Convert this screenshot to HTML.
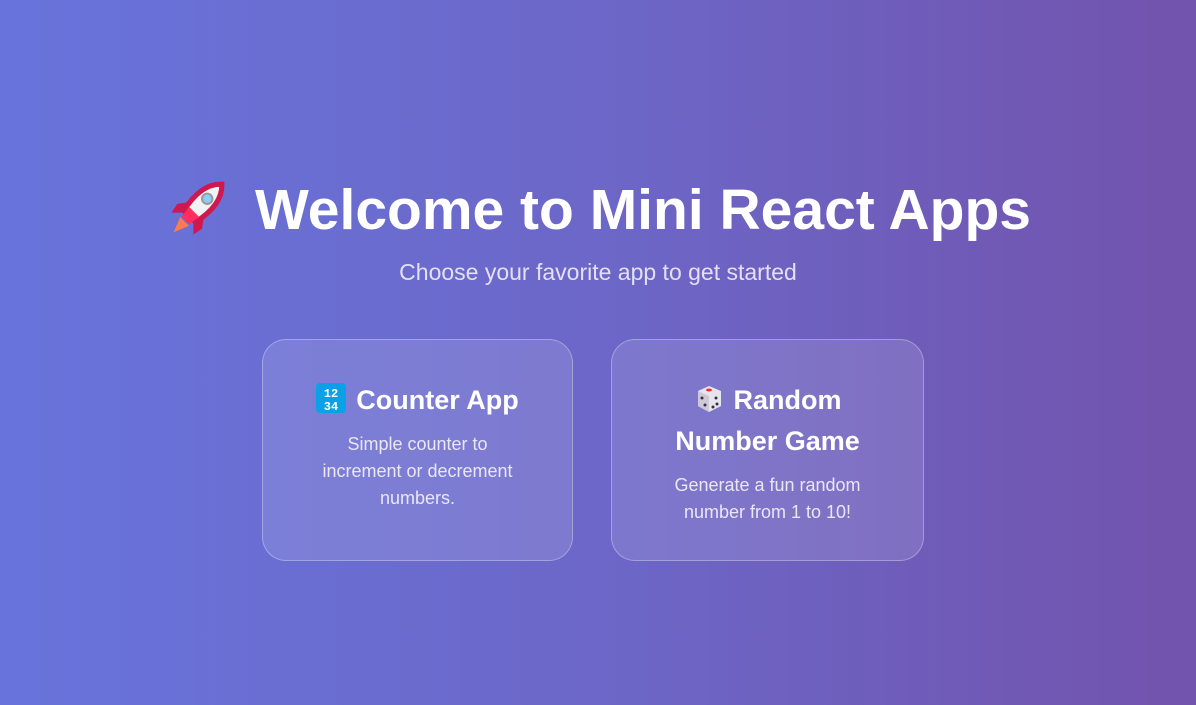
<!DOCTYPE html>
<html><head><meta charset="utf-8"><style>
*{margin:0;padding:0;box-sizing:border-box}
html,body{width:1196px;height:705px;overflow:hidden}
body{background:linear-gradient(90deg,#6874dc 0%,#6c67c8 50%,#7253ad 100%);font-family:"Liberation Sans",sans-serif;color:#fff;position:relative}
h1{position:absolute;top:174px;left:0;width:1196px;text-align:center;font-size:57px;font-weight:bold;line-height:72px;white-space:nowrap}
h1 svg{vertical-align:-12px;margin-right:26px}
.sub{position:absolute;top:259px;left:0;width:1196px;text-align:center;font-size:23px;color:#e4e0f4}
.card{position:absolute;top:339px;width:311px;height:222px;border-radius:24px;background:rgba(255,255,255,0.12);border:1px solid rgba(255,255,255,0.3);text-align:center;padding:0 30px}
.card h2{font-size:27px;font-weight:bold;line-height:41px}
.card h2 svg{vertical-align:-4px;margin-right:10px}
.card p{font-size:18px;line-height:27px;color:#eae6f6;margin-left:auto;margin-right:auto}
</style></head><body>
<h1><svg width="64" height="64" viewBox="0 0 62 60"><g transform="rotate(45 31 30)"><path d="M31 -4 C42 6 43 22 39 40 L23 40 C19 22 20 6 31 -4 Z" fill="#f2f2f2" stroke="#d0174f" stroke-width="5"/><path d="M23 28 L14 40 L16 50 L24 42 Z M39 28 L48 40 L46 50 L38 42 Z" fill="#d0174f"/><path d="M24 34 L38 34 L36 46 L26 46 Z" fill="#ff2e5f"/><path d="M25 47 L37 47 L31 62 Z" fill="#ff7a4c"/><circle cx="31" cy="16" r="5" fill="#8ecdf6" stroke="#999" stroke-width="2"/></g></svg>Welcome to Mini React Apps</h1>
<div class="sub">Choose your favorite app to get started</div>
<div class="card" style="left:262px;padding-top:40px"><h2><svg width="30" height="30" viewBox="0 0 30 30"><rect width="30" height="30" rx="4" fill="#0ba0e8"/><text x="15" y="14" font-size="12" font-weight="bold" fill="#fff" text-anchor="middle" font-family="Liberation Mono">12</text><text x="15" y="27" font-size="12" font-weight="bold" fill="#fff" text-anchor="middle" font-family="Liberation Mono">34</text></svg>Counter App</h2><p style="margin-top:10px;width:220px">Simple counter to increment or decrement numbers.</p></div>
<div class="card" style="left:611px;width:313px;padding-top:40px"><h2><svg width="30" height="30" viewBox="0 0 30 30"><path d="M4 8 L15 3 L27 8 L27 23 L15 29 L4 23 Z" fill="#e8e4ec"/><path d="M4 8 L15 13 L15 29 L4 23 Z" fill="#cfc8d6"/><ellipse cx="15" cy="7" rx="3" ry="1.5" fill="#e33"/><circle cx="8" cy="15" r="1.5" fill="#334"/><circle cx="11" cy="22" r="1.5" fill="#334"/><circle cx="22" cy="15" r="1.5" fill="#334"/><circle cx="19" cy="24" r="1.5" fill="#334"/><circle cx="23" cy="21" r="1.5" fill="#334"/></svg>Random Number Game</h2><p style="margin-top:10px">Generate a fun random number from 1 to 10!</p></div>
</body></html>
